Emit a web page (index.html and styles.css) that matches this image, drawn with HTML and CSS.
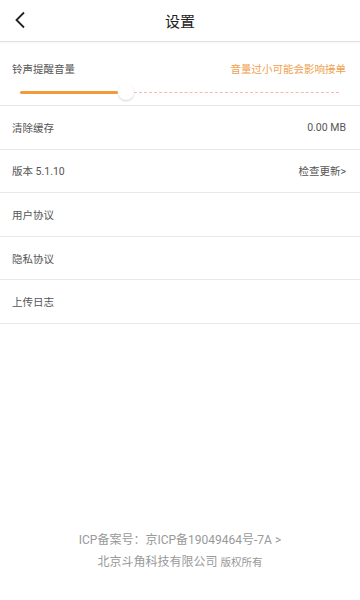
FILE: index.html
```html
<!DOCTYPE html>
<html lang="zh-CN">
<head>
    <meta charset="UTF-8">
    <title>设置</title>
    <link rel="stylesheet" href="styles.css">
</head>
<body>
<div class="page">
    <!-- 顶部导航 -->
    <div class="nav-bar">
        <span class="nav-back">
            <svg width="12" height="18" viewBox="0 0 12 18"><path d="M10 1.5 L2.5 9 L10 16.5" fill="none" stroke="#222" stroke-width="1.8"/></svg>
        </span>
        <span class="nav-title">设置</span>
    </div>

    <!-- 音量 -->
    <div class="volume-block">
        <div class="volume-head">
            <span class="row-label">铃声提醒音量</span>
            <span class="volume-tip">音量过小可能会影响接单</span>
        </div>
        <div class="slider">
            <div class="slider-fill" style="width: 98px"></div>
            <div class="slider-thumb"></div>
            <div class="slider-rest"></div>
        </div>
    </div>

    <!-- 设置列表 -->
    <div class="setting-row">
        <span class="row-label">清除缓存</span>
        <span class="row-value">0.00 MB</span>
    </div>
    <div class="setting-row">
        <span class="row-label">版本 5.1.10</span>
        <span class="row-value">检查更新&gt;</span>
    </div>
    <div class="setting-row">
        <span class="row-label">用户协议</span>
    </div>
    <div class="setting-row">
        <span class="row-label">隐私协议</span>
    </div>
    <div class="setting-row">
        <span class="row-label">上传日志</span>
    </div>

    <!-- 底部备案 -->
    <div class="footer">
        <div class="footer-line">ICP备案号：京ICP备19049464号-7A &gt;</div>
        <div class="footer-line">北京斗角科技有限公司 <span class="footer-small">版权所有</span></div>
    </div>
</div>
</body>
</html>
```

FILE: styles.css
```css
body {
    margin: 0;
    padding: 0;
    background-color: #ffffff;
    font-family: Roboto, "Noto Sans CJK SC", sans-serif;
}
.page {
    height: 600px;
    display: flex;
    flex-direction: column;
}

/* 导航 */
.nav-bar {
    height: 41px;
    display: flex;
    align-items: center;
    justify-content: center;
    position: relative;
    border-bottom: 1px solid #e2e2e2;
    box-shadow: 0 1px 2px rgba(0, 0, 0, 0.05);
}
.nav-back {
    position: absolute;
    left: 14px;
    top: 11px;
}
.nav-title {
    font-size: 15px;
    color: #222222;
}

/* 音量 */
.volume-block {
    height: 63px;
    border-bottom: 1px solid #e8e8e8;
}
.volume-head {
    display: flex;
    justify-content: space-between;
    align-items: center;
    padding: 18px 14px 0 12px;
    height: 17px;
}
.volume-tip {
    font-size: 10.5px;
    color: #f0a04b;
}
.slider {
    display: flex;
    align-items: center;
    margin: 6px 21px 0 20px;
    height: 18px;
}
.slider-fill {
    height: 3px;
    background-color: #f39a3a;
    border-radius: 2px;
}
.slider-thumb {
    width: 16px;
    height: 16px;
    border-radius: 50%;
    background-color: #ffffff;
    box-shadow: 0 1px 2px rgba(0, 0, 0, 0.18);
    flex-shrink: 0;
}
.slider-rest {
    flex: 1;
    border-top: 1px dashed #f5b8b8;
}

/* 列表 */
.setting-row {
    height: 42.6px;
    display: flex;
    justify-content: space-between;
    align-items: center;
    padding: 0 14px 0 12px;
    border-bottom: 1px solid #e8e8e8;
}
.row-label {
    font-size: 10.5px;
    color: #555555;
}
.row-value {
    font-size: 10.5px;
    color: #555555;
}

/* 底部 */
.footer {
    margin-top: auto;
    padding-bottom: 26px;
    text-align: center;
}
.footer-line {
    font-size: 12px;
    color: #999999;
    line-height: 22px;
}
.footer-small {
    font-size: 10.5px;
}
```
